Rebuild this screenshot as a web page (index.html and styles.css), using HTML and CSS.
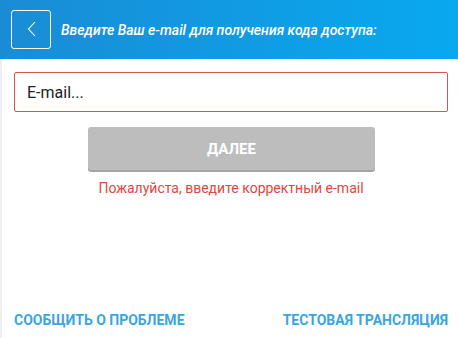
FILE: index.html
```html
<!DOCTYPE html>
<html lang="ru">
<head>
    <meta charset="UTF-8">
    <meta name="viewport" content="width=device-width, initial-scale=1.0">
    <title>Вход</title>
    <link rel="stylesheet" href="styles.css">
</head>
<body>
    <div class="page">
        <div class="header">
            <button class="back-btn" type="button">
                <svg width="9" height="16" viewBox="0 0 9 16"><polyline points="8,1 1.5,8 8,15" fill="none" stroke="#fff" stroke-width="1.1"/></svg>
            </button>
            <div class="header-title">Введите Ваш e-mail для получения кода доступа:</div>
        </div>
        <div class="content">
            <input class="email-input" type="text" placeholder="E-mail...">
            <button class="next-btn" type="button">ДАЛЕЕ</button>
            <div class="error">Пожалуйста, введите корректный e-mail</div>
        </div>
        <div class="footer">
            <a href="#">СООБЩИТЬ О ПРОБЛЕМЕ</a>
            <a href="#">ТЕСТОВАЯ ТРАНСЛЯЦИЯ</a>
        </div>
    </div>
</body>
</html>
```

FILE: styles.css
```css
body {
    margin: 0;
    font-family: Roboto, 'Liberation Sans', sans-serif;
    background: #fff;
}
.page {
    height: 338px;
    display: flex;
    flex-direction: column;
    border-left: 2px solid #eeeeee;
    box-sizing: border-box;
}
.header {
    height: 59px;
    margin-left: -2px;
    background: linear-gradient(to right, #1a8cd5, #08a9ef);
    display: flex;
    align-items: center;
    padding: 0 11px;
    box-sizing: border-box;
}
.back-btn {
    width: 40px;
    height: 39px;
    border: 1px solid #fff;
    border-radius: 3px;
    background: transparent;
    display: flex;
    align-items: center;
    justify-content: center;
    padding: 0;
    margin-top: -1px;
}
.header-title {
    color: #fff;
    font-style: italic;
    font-weight: 500;
    font-size: 14px;
    margin-left: 10px;
}
.content {
    padding: 13px 10px 0 12px;
    display: flex;
    flex-direction: column;
    align-items: center;
}
.email-input {
    width: 100%;
    height: 40px;
    box-sizing: border-box;
    border: 1px solid #d9534f;
    border-radius: 2px;
    padding: 0 12px;
    font-family: Roboto, 'Liberation Sans', sans-serif;
    font-size: 16px;
    outline: none;
}
.email-input::placeholder {
    color: #222;
}
.next-btn {
    margin-top: 15px;
    width: 287px;
    height: 43px;
    background: #bdbdbd;
    border: none;
    border-radius: 3px;
    box-shadow: 0 2px 0 #a5a5a5;
    color: #fff;
    font-family: Roboto, 'Liberation Sans', sans-serif;
    font-weight: 700;
    font-size: 15px;
    margin-left: 1px;
}
.error {
    margin-top: 10px;
    color: #e0473d;
    font-size: 14px;
}
.footer {
    margin-top: auto;
    display: flex;
    justify-content: space-between;
    padding: 0 10px 10px 12px;
}
.footer a {
    color: #3aa6df;
    font-weight: 700;
    font-size: 14px;
    text-decoration: none;
}
```
